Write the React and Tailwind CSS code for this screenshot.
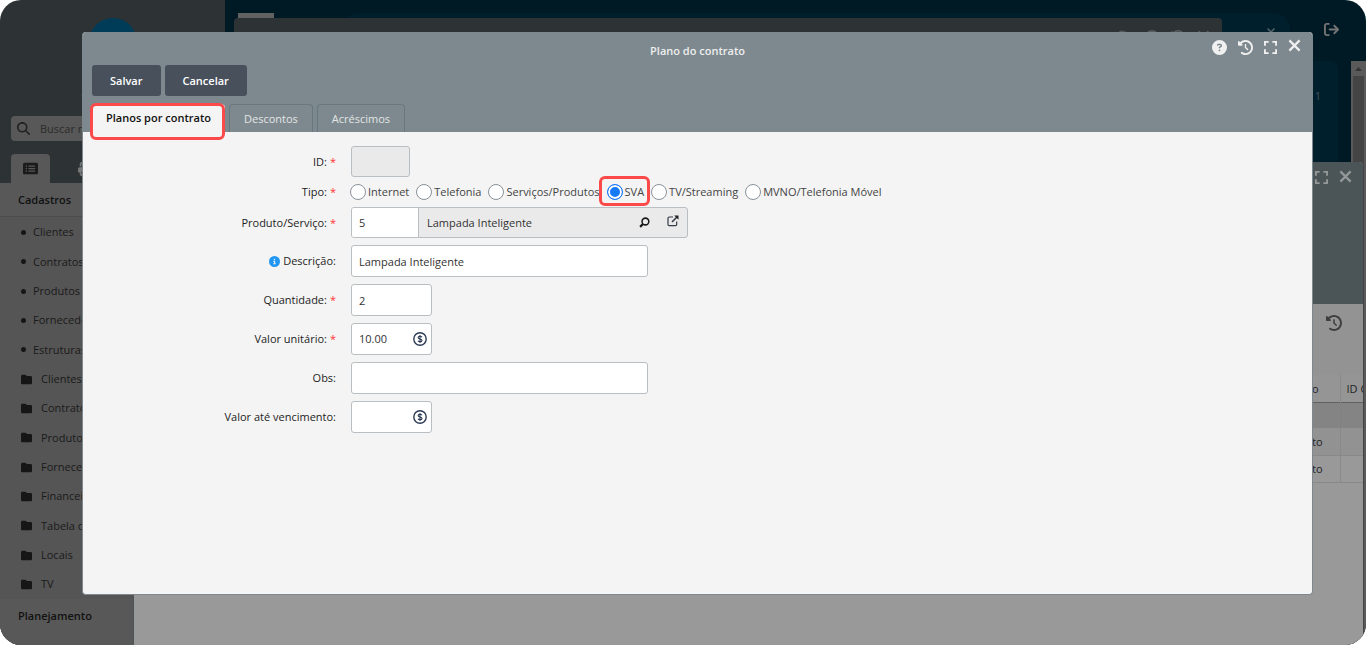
import React from "react";
import {
  FaArrowRightFromBracket,
  FaCircleInfo,
  FaCircleQuestion,
  FaClockRotateLeft,
  FaFilePen,
  FaFolder,
  FaMagnifyingGlass,
  FaPrint,
  FaRectangleList,
  FaXmark,
} from "react-icons/fa6";

const shortcuts = ["Clientes", "Contratos", "Produtos", "Fornecedores", "Estruturas"];
const folders = ["Clientes", "Contratos", "Produtos", "Fornecedores", "Financeiro", "Tabela de preços", "Locais", "TV"];
const types = ["Internet", "Telefonia", "Serviços/Produtos", "SVA", "TV/Streaming", "MVNO/Telefonia Móvel"];

function ExpandIcon({ className }) {
  return (
    <svg viewBox="0 0 14 14" className={className} fill="none" stroke="currentColor" strokeWidth="2" aria-hidden="true">
      <path d="M1 5V1h4M9 1h4v4M13 9v4H9M5 13H1V9" />
    </svg>
  );
}

function CloseIcon({ className }) {
  return (
    <svg viewBox="0 0 14 14" className={className} fill="none" stroke="currentColor" strokeWidth="2.4" aria-hidden="true">
      <path d="M1.500 1.500l11 11M12.500 1.500l-11 11" />
    </svg>
  );
}

function DollarIcon() {
  return (
    <svg viewBox="0 0 14 14" className="size-[14px]" fill="none" stroke="#2b3a55" aria-hidden="true">
      <circle cx="7" cy="7" r="6.2" strokeWidth="1.4" />
      <path
        d="M8.9 5.2C8.6 4.6 7.900 4.300 7 4.300c-1.100 0-1.900.500-1.900 1.300 0 1.900 3.900.9 3.900 2.800 0 .8-.9 1.300-2 1.300-1 0-1.700-.4-2-1M7 3.100v7.800"
        strokeWidth="1.1"
      />
    </svg>
  );
}

function SearchIcon() {
  return (
    <svg viewBox="0 0 12 12" className="size-[11px]" fill="none" stroke="#1b1b1b" aria-hidden="true">
      <circle cx="7" cy="4.900" r="3.700" strokeWidth="1.700" />
      <path d="M4.300 7.700L1.200 10.800" strokeWidth="2.500" />
    </svg>
  );
}

function OpenIcon() {
  return (
    <svg viewBox="0 0 12 12" className="size-3" fill="none" stroke="#333b47" aria-hidden="true">
      <path d="M6 2H2.200C1.500 2 1 2.500 1 3.200v6.300c0 .7.500 1.200 1.200 1.200h6.300c.7 0 1.200-.5 1.200-1.200V6.500" strokeWidth="1.200" />
      <path d="M5 7l5-5" strokeWidth="1.600" />
      <path d="M7.200.4h4.300v4.300z" fill="#222" stroke="none" />
    </svg>
  );
}

function Sidebar() {
  return (
    <aside className="flex w-[225px] shrink-0 flex-col bg-[#2d3335]">
      <div className="flex h-[116px] flex-col items-center pt-[18px]">
        <div className="size-12 rounded-full bg-[#003c58]" />
        <p className="mt-6 w-16 text-left text-[11px] leading-4 text-[#74797a]">1</p>
      </div>
      <label className="mx-[11px] flex h-[25px] items-center gap-2 rounded bg-[#585858] px-1.5 text-[#222]">
        <FaMagnifyingGlass className="size-[13px] shrink-0" />
        <input
          aria-label="Buscar no menu"
          placeholder="Buscar no menu"
          className="w-full bg-transparent pt-px pl-0.5 text-[11px] outline-none placeholder:text-[#2b2b2b]"
        />
      </label>
      <div className="mt-[13px] flex h-[29px] pl-[11px]">
        <button aria-label="Menu" className="flex w-[39px] items-center justify-center rounded-t bg-[#585858] text-[#1b1b1b]">
          <FaRectangleList className="size-[15px]" />
        </button>
        <button aria-label="Imprimir" className="ml-7 text-[#777]">
          <FaPrint className="size-[14px]" />
        </button>
      </div>
      <nav className="flex flex-1 flex-col bg-[#555]">
        <h2 className="flex h-[34px] items-center border-b border-[#4c4c4c] bg-[#585858] pt-px pl-[18px] text-[11px] font-semibold text-[#111]">
          Cadastros
        </h2>
        <ul className="flex flex-1 flex-col pt-px text-[11px] text-[#1a1a1a]">
          {shortcuts.map((t) => (
            <li key={t} className="flex flex-1 items-center gap-[7px] pl-[21px]">
              <span className="size-[5px] rounded-full bg-[#161616]" />
              <a href="#">{t}</a>
            </li>
          ))}
          {folders.map((t) => (
            <li key={t} className="flex flex-1 items-center gap-[9px] pl-[21px]">
              <FaFolder className="size-[11px] text-[#161616]" />
              <a href="#">{t}</a>
            </li>
          ))}
        </ul>
        <h2 className="h-[46px] bg-[#585858] pt-[9px] pl-[18px] text-[11px] leading-4 font-semibold text-[#111]">Planejamento</h2>
      </nav>
    </aside>
  );
}

function Desktop() {
  return (
    <div className="relative min-w-0 flex-1 bg-[#001a25]">
      <div className="absolute top-[13px] right-[76px] left-[117px] h-8 rounded-[18px] bg-[#001f2d]">
        <FaXmark className="absolute top-[13px] right-[13px] size-3 text-[#59676d]" />
      </div>
      <div className="absolute top-[61px] right-7 left-4 h-60 rounded-lg bg-[#001f2d]">
        <span className="absolute top-[27px] right-[17px] text-[11px] leading-4 text-[#43545c]">: 1</span>
      </div>
      <div className="absolute top-[13px] left-[13px] h-2 w-9 bg-[#626262]" />
      <div className="absolute top-[18px] right-36 left-[9px] flex h-40 items-start justify-end gap-3 rounded-t bg-[#2d3335] pt-3 pr-3 text-[#555b5d]">
        <FaFilePen className="size-[14px]" />
        <FaCircleQuestion className="size-[14px]" />
        <FaClockRotateLeft className="size-[14px]" />
        <CloseIcon className="size-[13px]" />
      </div>
      <button aria-label="Sair" className="absolute top-[22px] right-[27px] text-[#747474]">
        <FaArrowRightFromBracket className="size-[15px]" />
      </button>
      <div className="absolute top-[61px] right-0 bottom-0 flex w-[15px] flex-col items-center bg-[#5a5a5a]">
        <svg viewBox="0 0 15 15" className="size-[15px] shrink-0" fill="#353535" aria-hidden="true">
          <path d="M4 10h7L7.500 6z" />
        </svg>
        <div className="w-[11px] flex-1 bg-[#444]" />
      </div>
    </div>
  );
}

function ContractWindow() {
  return (
    <section className="absolute top-[162px] right-[3px] bottom-0 left-[133px] flex flex-col overflow-hidden rounded-t border-l border-[#4b5558] bg-[#999]">
      <header className="flex h-[142px] items-start justify-end gap-[11px] bg-[#4b5558] pt-2 pr-[11px] text-[#949899]">
        <ExpandIcon className="mt-px size-[13px]" />
        <CloseIcon className="size-[13px]" />
      </header>
      <div className="flex h-[71px] items-start justify-end bg-[#939393] pt-[11px] pr-[21px] text-[#3f3f3f]">
        <FaClockRotateLeft className="size-4" />
      </div>
      <table className="w-full table-fixed border-collapse text-[11px] text-[#1f1f1f]">
        <thead>
          <tr className="h-[27px] border-b border-[#606060] bg-[#959595]">
            <th className="border-r border-[#898989] pt-px pr-[21px] text-right font-normal">Plano</th>
            <th className="w-[23px] overflow-hidden pt-px pl-1.5 text-left font-normal whitespace-nowrap">ID Contrato</th>
          </tr>
        </thead>
        <tbody>
          <tr className="h-[26px] bg-[#848484]">
            <td className="border-r border-[#808080]" />
            <td />
          </tr>
          <tr className="h-[27px] border-b border-[#888] bg-[#929292]">
            <td className="border-r border-[#898989] pt-px pr-[17px] text-right">Contrato</td>
            <td />
          </tr>
          <tr className="h-[27px] border-b border-[#888]">
            <td className="border-r border-[#898989] pt-px pr-[17px] text-right">Contrato</td>
            <td />
          </tr>
        </tbody>
      </table>
    </section>
  );
}

function Row({ label, htmlFor, required, info, children }) {
  return (
    <div className="flex items-center gap-[15px]">
      <label htmlFor={htmlFor} className="flex w-[253px] shrink-0 items-center justify-end gap-[3px] leading-4 text-[#1d1d1d]">
        {info && <FaCircleInfo className="size-[11px] text-[#2196f3]" />}
        {label}
        {required && <span className="text-[#f33]">*</span>}
      </label>
      {children}
    </div>
  );
}

const field = "rounded-[3px] border border-[#b9bec2] bg-white px-[7px] text-[#333] outline-none";

function MoneyField({ id, value }) {
  return (
    <div className="flex h-8 w-[81px] items-center rounded-[3px] border border-[#b9bec2] bg-white pr-1">
      <input id={id} defaultValue={value} className="min-w-0 flex-1 bg-transparent pl-[7px] text-[#333] outline-none" />
      <button type="button" aria-label="Calcular valor">
        <DollarIcon />
      </button>
    </div>
  );
}

const tab = "rounded-t border border-b-0 border-[#69777e] px-3.5 pt-px text-[#e3e6e7]";
const action = "h-[31px] rounded-[3px] bg-[#47505b] px-[18px] pt-px";

function PlanDialog() {
  return (
    <div
      role="dialog"
      aria-label="Plano do contrato"
      className="absolute top-8 right-[53px] bottom-[50px] left-[82px] flex flex-col overflow-hidden rounded border border-t-0 border-[#7d898e] bg-[#f4f4f4] text-[11px]"
    >
      <header className="bg-[#7d898e] px-[9px]">
        <div className="grid h-[33px] grid-cols-[1fr_auto_1fr] items-start">
          <span />
          <h1 className="pt-[11px] leading-4 font-semibold text-[#eee]">Plano do contrato</h1>
          <div className="flex items-start justify-end gap-[11px] pt-[7px] pr-[2px] text-[#f0f0f0]">
            <button aria-label="Ajuda" className="pt-px"><FaCircleQuestion className="size-[15px]" /></button>
            <button aria-label="Histórico" className="pt-px"><FaClockRotateLeft className="size-[15px]" /></button>
            <button aria-label="Expandir" className="pt-[2px]"><ExpandIcon className="size-[13px]" /></button>
            <button aria-label="Fechar"><CloseIcon className="size-[13px]" /></button>
          </div>
        </div>
        <div className="flex gap-1 font-semibold text-white">
          <button className={action}>Salvar</button>
          <button className={action}>Cancelar</button>
        </div>
        <div role="tablist" className="mt-2 flex h-7 gap-1">
          <button role="tab" aria-selected="true" className="relative rounded-t bg-[#f4f4f4] px-3.5 pt-px font-semibold text-[#111]">
            Planos por contrato
            <span className="absolute -top-px right-0 -bottom-2 -left-[2px] rounded-md border-3 border-[#fc4a4a]" />
          </button>
          <button role="tab" aria-selected="false" className={tab}>Descontos</button>
          <button role="tab" aria-selected="false" className={tab}>Acréscimos</button>
        </div>
      </header>
      <form className="flex flex-col gap-[7px] pt-3.5">
        <Row label="ID:" htmlFor="id" required>
          <input id="id" readOnly className="h-[31px] w-[59px] rounded-[3px] border border-[#b9bec2] bg-[#eaeaea] px-[7px] outline-none" />
        </Row>
        <Row label="Tipo:" required>
          <div role="radiogroup" aria-label="Tipo" className="-ml-px flex h-4 items-center gap-[7px] text-[#444]">
            {types.map((t) => (
              <label key={t} className="relative flex items-center gap-[2px] leading-4 whitespace-nowrap">
                <input
                  type="radio"
                  name="tipo"
                  defaultChecked={t === "SVA"}
                  className="size-4 appearance-none rounded-full border border-[#8b929c] bg-white checked:border-[#1679f8] checked:bg-[#1679f8] checked:shadow-[inset_0_0_0_2px_#fff]"
                />
                {t}
                {t === "SVA" && (
                  <span className="absolute -top-2 -right-1.5 -bottom-1.5 -left-2 rounded-md border-3 border-[#fc4a4a]" />
                )}
              </label>
            ))}
          </div>
        </Row>
        <Row label="Produto/Serviço:" htmlFor="produto" required>
          <div className="flex h-[31px] w-[337px] items-stretch overflow-hidden rounded-[3px] border border-[#b9bec2] bg-[#eaeaea]">
            <input id="produto" defaultValue="5" className="w-[67px] border-r border-[#b9bec2] bg-white px-[7px] pt-px text-[#333] outline-none" />
            <input aria-label="Nome do produto" readOnly value="Lampada Inteligente" className="min-w-0 flex-1 bg-transparent px-2 pt-px text-[#333] outline-none" />
            <button type="button" aria-label="Pesquisar" className="w-7 pl-2">
              <SearchIcon />
            </button>
            <button type="button" aria-label="Abrir" className="w-7 pb-1 pl-2">
              <OpenIcon />
            </button>
          </div>
        </Row>
        <Row label="Descrição:" htmlFor="descricao" info>
          <input id="descricao" defaultValue="Lampada Inteligente" className={field + " h-8 w-[297px]"} />
        </Row>
        <Row label="Quantidade:" htmlFor="quantidade" required>
          <input id="quantidade" defaultValue="2" className={field + " h-8 w-[81px]"} />
        </Row>
        <Row label="Valor unitário:" htmlFor="valor" required>
          <MoneyField id="valor" value="10.00" />
        </Row>
        <Row label="Obs:" htmlFor="obs">
          <input id="obs" className={field + " h-8 w-[297px]"} />
        </Row>
        <Row label="Valor até vencimento:" htmlFor="vencimento">
          <MoneyField id="vencimento" value="" />
        </Row>
      </form>
    </div>
  );
}

export default function App() {
  return (
    <div className="bg-white font-['Open_Sans',sans-serif]">
      <main className="relative flex min-h-screen overflow-hidden rounded-[21px]">
        <Sidebar />
        <Desktop />
        <ContractWindow />
        <PlanDialog />
      </main>
    </div>
  );
}
